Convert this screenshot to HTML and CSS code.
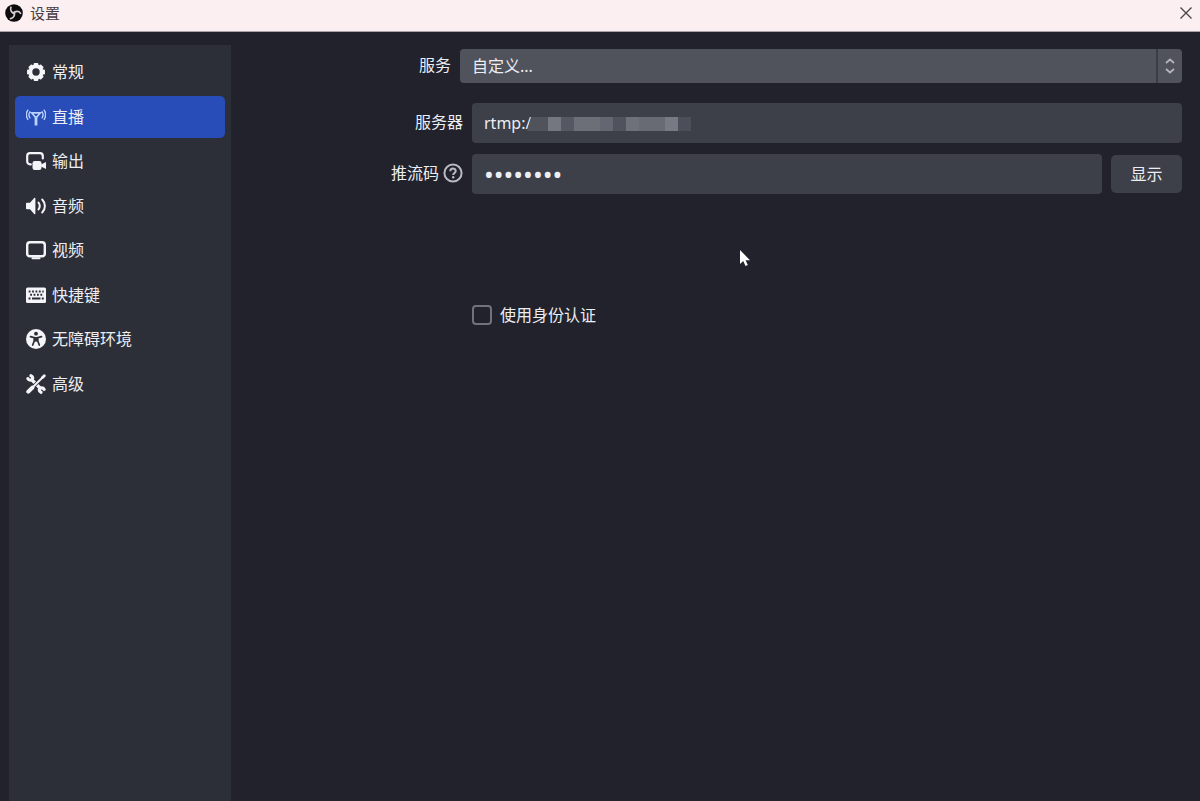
FILE: index.html
```html
<!DOCTYPE html>
<html lang="zh-CN">
<head>
    <meta charset="UTF-8">
    <meta name="viewport" content="width=device-width, initial-scale=1.0">
    <title>设置</title>
    <link rel="stylesheet" href="styles.css">
</head>
<body>
    <header class="titlebar">
        <svg class="app-logo" viewBox="0 0 20 20" aria-hidden="true">
            <circle cx="10" cy="10" r="9.8" fill="#0c0a0c"/>
            <g fill="none" stroke="#d8ced2" stroke-width="1.900" stroke-linecap="round">
                <path d="M10.500 10.500C7.500 9.800 5.200 7 6.600 3.600"/>
                <path d="M10.500 10.500C7.500 9.800 5.200 7 6.600 3.600" transform="rotate(120 10 10)"/>
                <path d="M10.500 10.500C7.500 9.800 5.200 7 6.600 3.600" transform="rotate(240 10 10)"/>
            </g>
        </svg>
        <h1>设置</h1>
        <button type="button" class="close-btn" aria-label="关闭">
            <svg viewBox="0 0 12 12"><path d="M.5.5l11 11M11.5.5l-11 11" fill="none" stroke="#4a4347" stroke-width="1.3"/></svg>
        </button>
    </header>

    <div class="window">
        <nav class="sidebar">
            <ul>
                <li><a href="#general">
                    <svg viewBox="0 0 20 20"><g fill="#f4f5f8"><path fill-rule="evenodd" d="M10 2.600a7.400 7.400 0 1 0 0 14.800a7.400 7.400 0 0 0 0-14.800zm0 3.700a3.700 3.700 0 1 1 0 7.400a3.700 3.700 0 0 1 0-7.400z"/><rect x="7.600" y="1" width="4.800" height="3.800" rx="1"/><rect x="7.600" y="15.200" width="4.800" height="3.800" rx="1"/><rect x="1" y="7.600" width="3.800" height="4.800" rx="1"/><rect x="15.200" y="7.600" width="3.800" height="4.800" rx="1"/><g transform="rotate(45 10 10)"><rect x="7.600" y="1.200" width="4.800" height="3.600" rx="1"/><rect x="7.600" y="15.200" width="4.800" height="3.600" rx="1"/><rect x="1.200" y="7.600" width="3.600" height="4.800" rx="1"/><rect x="15.200" y="7.600" width="3.600" height="4.800" rx="1"/></g></g></svg>
                    <span>常规</span></a></li>
                <li><a href="#stream" class="active" aria-current="page">
                    <svg viewBox="0 0 20 20"><g fill="none" stroke="#b9d2fb" stroke-linecap="round"><path stroke-width="1.700" d="M5.600 5.800h8.800L10 10.800z"/><path stroke-width="2.800" stroke-linecap="butt" d="M10 9.500V18.500"/><path stroke-width="1.400" d="M3.900 4.800c-1.200 1.800-1.200 4.200 0 6M1.800 3.200C.200 5.800.200 9.800 1.800 12.400M16.100 4.800c1.200 1.800 1.200 4.200 0 6M18.200 3.200C19.800 5.800 19.800 9.800 18.200 12.400"/></g></svg>
                    <span>直播</span></a></li>
                <li><a href="#output">
                    <svg viewBox="0 0 20 20"><path fill="none" stroke="#f4f5f8" stroke-width="2.200" stroke-linecap="round" d="M4.800 13.400H4a2.800 2.800 0 0 1-2.800-2.800V5A2.800 2.800 0 0 1 4 2.200h10A2.800 2.800 0 0 1 16.800 5v2.500"/><rect x="6.500" y="10" width="9" height="9" rx="2.200" fill="#f4f5f8"/><path fill="#f4f5f8" d="M15 13.500l5-2.500v7l-5-2.500z"/></svg>
                    <span>输出</span></a></li>
                <li><a href="#audio">
                    <svg viewBox="0 0 20 20"><path fill="#f4f5f8" d="M.800 6.800H4L8.200 2c.6-.6 1.200-.3 1.200.5v15c0 .8-.6 1.100-1.200.5L4 13.200H.800Q0 13.200 0 12.400V7.600Q0 6.800.800 6.800z"/><path fill="none" stroke="#f4f5f8" stroke-width="2" stroke-linecap="round" d="M12.500 6.500c1.600 2.200 1.600 4.800 0 7M16.200 3.500c3.600 3.800 3.600 9.200 0 13"/></svg>
                    <span>音频</span></a></li>
                <li><a href="#video">
                    <svg viewBox="0 0 20 20"><rect x="1.200" y="2.200" width="17.600" height="14" rx="2.800" fill="none" stroke="#f4f5f8" stroke-width="2.400"/><path d="M6.500 18.300h7" stroke="#f4f5f8" stroke-width="2" stroke-linecap="round"/></svg>
                    <span>视频</span></a></li>
                <li><a href="#hotkeys">
                    <svg viewBox="0 0 20 20"><rect y="2.500" width="20" height="15.500" rx="1.500" fill="#f4f5f8"/><path fill="none" stroke="#2c2e38" stroke-width="2" stroke-dasharray="1.800 1.600" d="M2.700 6.500h15M4.200 9.700h12"/><path stroke="#2c2e38" stroke-width="1.900" d="M2.500 13.500h2M6 13.500h8.500M15.800 13.500h2"/></svg>
                    <span>快捷键</span></a></li>
                <li><a href="#accessibility">
                    <svg viewBox="0 0 20 20"><circle cx="10" cy="10" r="10" fill="#f4f5f8"/><circle cx="10" cy="4.700" r="1.900" fill="#2c2e38"/><path d="M4.500 7.600l3.800 1v3.200L6.700 16M15.500 7.600l-3.800 1v3.200L13.300 16" fill="none" stroke="#2c2e38" stroke-width="1.700" stroke-linecap="round"/><path d="M7.800 8h4.400v4.600H7.800z" fill="#2c2e38"/></svg>
                    <span>无障碍环境</span></a></li>
                <li><a href="#advanced">
                    <svg viewBox="0 0 20 20"><g fill="none" stroke="#f4f5f8" stroke-linecap="round"><path stroke-width="3.200" stroke-linecap="butt" d="M5.500 5.500l9 9"/><path stroke-width="3.200" d="M1.900 4.600A2.600 2.600 0 0 0 6.600 4.600A2.600 2.600 0 0 0 5 1.700M18.100 15.400A2.600 2.600 0 0 0 13.400 15.400A2.600 2.600 0 0 0 15 18.300"/><path stroke="#2c2e38" stroke-width="3.400" stroke-linecap="butt" d="M13 7L7 13"/><path stroke-width="2" d="M17 3L7 13"/><path stroke-width="4" d="M6.400 13.600L2.300 17.700"/><path stroke-width="2.800" d="M18.300 1.700L16.500 3.500"/></g></svg>
                    <span>高级</span></a></li>
            </ul>
        </nav>

        <main class="content">
            <form>
                <div class="form-row service-row">
                    <label for="service">服务</label>
                    <div class="select-box">
                        <select id="service" name="service">
                            <option>自定义...</option>
                        </select>
                        <span class="select-arrows">
                            <svg viewBox="0 0 10 16"><path d="M1 5l4-3.500L9 5M1 11l4 3.500L9 11" fill="none" stroke="#b4b6bf" stroke-width="1.700"/></svg>
                        </span>
                    </div>
                </div>

                <div class="form-row">
                    <label for="server">服务器</label>
                    <div class="field">
                        <input type="text" id="server" name="server" value="rtmp:/">
                        <svg class="mask" viewBox="0 0 164 14" aria-hidden="true">
                            <path fill="#50535c" d="M4 0h17v14H0z"/>
                            <path fill="#747780" d="M21 0h13v14H21z"/>
                            <path fill="#555862" d="M34 0h13v14H34z"/>
                            <path fill="#6c6f78" d="M47 0h26v14H47z"/>
                            <path fill="#646771" d="M73 0h13v14H73z"/>
                            <path fill="#50535d" d="M86 0h13v14H86z"/>
                            <path fill="#6e717a" d="M99 0h13v14H99z"/>
                            <path fill="#686b74" d="M112 0h26v14h-26z"/>
                            <path fill="#777a83" d="M138 0h13v14h-13z"/>
                            <path fill="#4c4f59" d="M151 0h13v14h-13z"/>
                        </svg>
                    </div>
                </div>

                <div class="form-row">
                    <label for="streamKey">推流码
                        <svg class="help" viewBox="0 0 20 20"><circle cx="10" cy="10" r="8.600" fill="none" stroke="#b9bac3" stroke-width="2"/><path d="M7.300 8.200C7.300 4.600 12.700 4.700 12.700 8c0 1.900-2.500 2-2.500 3.900" fill="none" stroke="#b9bac3" stroke-width="2"/><circle cx="10.200" cy="14.300" r="1.200" fill="#b9bac3"/></svg>
                    </label>
                    <div class="field">
                        <input type="password" id="streamKey" name="streamKey" value="12345678">
                    </div>
                    <button type="button" class="show-btn">显示</button>
                </div>

                <div class="auth-row">
                    <input type="checkbox" id="useAuth" name="useAuth">
                    <label for="useAuth">使用身份认证</label>
                </div>
            </form>
        </main>
    </div>

    <svg class="cursor" viewBox="0 0 12 18" aria-hidden="true"><path d="M1 1v14l3.200-3 2.300 5 2.300-1-2.200-4.800H11z" fill="#fff"/></svg>
</body>
</html>
```

FILE: styles.css
```css
* {
    margin: 0;
    padding: 0;
    box-sizing: border-box;
    font-family: 'Noto Sans', 'Noto Sans CJK SC', sans-serif;
}

body {
    background-color: #21222b;
    color: #eceef3;
    font-size: 16px;
    line-height: 24px;
    min-height: 100vh;
    display: flex;
    flex-direction: column;
}

.titlebar {
    display: flex;
    align-items: center;
    height: 32px;
    padding: 0 7px 6px 5px;
    background-color: #fbeff2;
    border-bottom: 1px solid #a9a2a8;
}

.app-logo {
    width: 18px;
    height: 18px;
    margin-right: 7px;
}

h1 {
    color: #453e42;
    font-size: 15px;
    font-weight: 400;
    line-height: 22px;
}

.close-btn {
    width: 14px;
    height: 14px;
    margin-left: auto;
    border: none;
    background: none;
    cursor: pointer;
}

.close-btn svg {
    display: block;
    width: 12px;
    height: 12px;
    margin: 0 auto;
}

.window {
    flex: 1;
    display: flex;
    padding: 13px 18px 0 9px;
}

.sidebar {
    width: 222px;
    padding: 6px;
    background-color: #2c2e38;
}

.sidebar ul {
    display: flex;
    flex-direction: column;
    justify-content: space-between;
    height: 354px;
    list-style: none;
}

.sidebar a {
    display: flex;
    align-items: center;
    gap: 6px;
    height: 42px;
    padding: 0 11px;
    border-radius: 5px;
    color: #eceef3;
    text-decoration: none;
}

.sidebar a.active {
    background-color: #284cb8;
}

.sidebar svg {
    width: 20px;
    height: 20px;
}

.content {
    flex: 1;
    padding-top: 4px;
}

.form-row {
    display: flex;
    align-items: center;
    gap: 9px;
    margin-bottom: 11px;
}

.form-row > label {
    display: flex;
    justify-content: flex-end;
    align-items: center;
    gap: 4px;
    width: 232px;
    padding-bottom: 3px;
}

.service-row {
    margin-bottom: 20px;
}

.service-row > label {
    width: 220px;
}

.select-box {
    position: relative;
    flex: 1;
}

select {
    display: block;
    appearance: none;
    width: 100%;
    height: 34px;
    padding: 0 36px 0 12px;
    border: none;
    border-radius: 4px;
    background-color: #50525c;
    color: #eceef3;
    font-size: 16px;
}

.select-arrows {
    position: absolute;
    top: 0;
    right: 0;
    display: flex;
    justify-content: center;
    align-items: center;
    width: 26px;
    height: 100%;
    border-left: 2px solid #3a3c46;
    pointer-events: none;
}

.select-arrows svg {
    width: 10px;
    height: 16px;
}

.field {
    position: relative;
    flex: 1;
}

.field input {
    display: block;
    width: 100%;
    height: 40px;
    padding: 0 12px;
    border: none;
    border-radius: 4px;
    background-color: #3d3f49;
    color: #eceef3;
    font-size: 16px;
}

.field input[type="password"] {
    font-size: 26px;
}

.mask {
    position: absolute;
    top: 14px;
    left: 55px;
    width: 164px;
    height: 14px;
}

.help {
    width: 20px;
    height: 20px;
}

.show-btn {
    width: 71px;
    height: 38px;
    padding-bottom: 2px;
    border: none;
    border-radius: 5px;
    background-color: #3d3f49;
    color: #eceef3;
    font-size: 16px;
    cursor: pointer;
}

.auth-row {
    display: flex;
    align-items: center;
    gap: 8px;
    margin-top: 109px;
    padding-left: 241px;
}

.auth-row input {
    appearance: none;
    width: 20px;
    height: 20px;
    border: 2px solid #70727d;
    border-radius: 4px;
}

.auth-row input:checked {
    background-color: #284cb8;
}

.cursor {
    position: absolute;
    top: 249px;
    left: 739px;
    width: 12px;
    height: 18px;
}
```
